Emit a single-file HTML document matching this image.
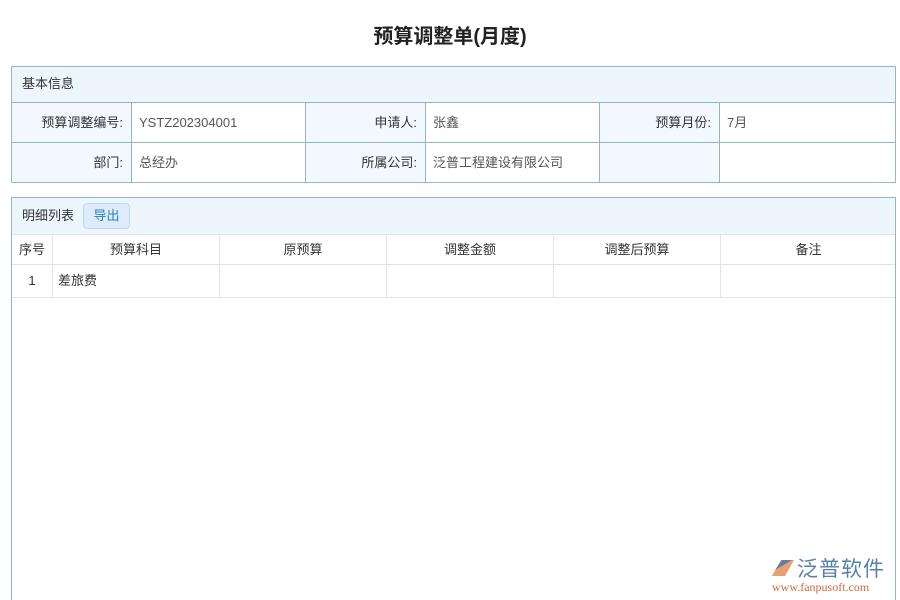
<!DOCTYPE html>
<html><head><meta charset="utf-8"><style>
*{margin:0;padding:0;box-sizing:border-box}
html,body{width:900px;height:600px;overflow:hidden}
body{background:#fff;font-family:"Liberation Sans","Noto Sans CJK SC",sans-serif;font-size:13px;color:#333;position:relative}
.a{position:absolute}
h1{position:absolute;left:0;width:900px;top:20px;text-align:center;font-size:20px;font-weight:bold;color:#222}
.bx{position:absolute;border:1px solid #8fb6c9}
.l{position:absolute;background:#f2f8fe;text-align:right;padding-right:8px;line-height:39px;border-right:1px solid #8fb6c9}
.v{position:absolute;line-height:39px;padding-left:7px;border-right:1px solid #8fb6c9;color:#555}
.hl{position:absolute;left:0;right:0;height:1px;background:#8fb6c9}
.th,.td{position:absolute;text-align:center;border-right:1px solid #e3e3e3}
.gl{position:absolute;left:0;right:0;height:1px;background:#e3e3e3}
</style></head><body>
<h1>预算调整单(月度)</h1>
<div class="bx" style="left:11px;top:66px;width:885px;height:117px">
 <div class="a" style="left:0;top:0;right:0;height:36px;background:#eef6fd;line-height:34px;padding-left:10px">基本信息</div>
 <div class="hl" style="top:35px"></div>
 <div class="hl" style="top:75px"></div>
 <div class="l" style="left:0;top:36px;width:120px;height:39px">预算调整编号:</div>
 <div class="v" style="left:120px;top:36px;width:174px;height:39px">YSTZ202304001</div>
 <div class="l" style="left:294px;top:36px;width:120px;height:39px">申请人:</div>
 <div class="v" style="left:414px;top:36px;width:174px;height:39px">张鑫</div>
 <div class="l" style="left:588px;top:36px;width:120px;height:39px">预算月份:</div>
 <div class="v" style="left:708px;top:36px;width:176px;height:39px;border:none">7月</div>
 <div class="l" style="left:0;top:76px;width:120px;height:39px">部门:</div>
 <div class="v" style="left:120px;top:76px;width:174px;height:39px">总经办</div>
 <div class="l" style="left:294px;top:76px;width:120px;height:39px">所属公司:</div>
 <div class="v" style="left:414px;top:76px;width:174px;height:39px">泛普工程建设有限公司</div>
 <div class="l" style="left:588px;top:76px;width:120px;height:39px"></div>
</div>
<div class="bx" style="left:11px;top:197px;width:885px;height:410px">
 <div class="a" style="left:0;top:0;right:0;height:37px;background:#eef6fd;border-bottom:1px solid #e3e3e3"></div>
 <div class="a" style="left:10px;top:0;line-height:36px">明细列表</div>
 <div class="a" style="left:71px;top:5px;width:47px;height:26px;background:#dcecfa;border:1px solid #bcd7ee;border-radius:4px;color:#2a7fc9;text-align:center;line-height:24px">导出</div>
 <div class="th" style="left:0;top:37px;width:41px;height:29px;line-height:29px">序号</div>
 <div class="th" style="left:41px;top:37px;width:167px;height:29px;line-height:29px">预算科目</div>
 <div class="th" style="left:208px;top:37px;width:167px;height:29px;line-height:29px">原预算</div>
 <div class="th" style="left:375px;top:37px;width:167px;height:29px;line-height:29px">调整金额</div>
 <div class="th" style="left:542px;top:37px;width:167px;height:29px;line-height:29px">调整后预算</div>
 <div class="th" style="left:709px;top:37px;width:175px;height:29px;line-height:29px;border:none">备注</div>
 <div class="gl" style="top:66px"></div>
 <div class="td" style="left:0;top:67px;width:41px;height:32px;line-height:32px">1</div>
 <div class="td" style="left:41px;top:67px;width:167px;height:32px;line-height:32px;text-align:left;padding-left:5px">差旅费</div>
 <div class="td" style="left:208px;top:67px;width:167px;height:32px"></div>
 <div class="td" style="left:375px;top:67px;width:167px;height:32px"></div>
 <div class="td" style="left:542px;top:67px;width:167px;height:32px"></div>
 <div class="gl" style="top:99px"></div>
</div>
<div class="a" style="left:770px;top:553px;width:125px;height:45px">
 <svg class="a" style="left:0;top:3px" width="26" height="22" viewBox="0 0 26 22"><path d="M2 20 L11 4 L24 4 L15 20Z" fill="#e8a070"/><path d="M5 14 L12 4 L22 4 Z" fill="#5a7fa8"/></svg>
 <div class="a" style="left:27px;top:0;font-size:21px;color:#5a7fa8;white-space:nowrap;letter-spacing:1px">泛普软件</div>
 <div class="a" style="left:2px;top:27px;font-size:12px;color:#d06a40;font-family:'Liberation Serif',serif;white-space:nowrap">www.fanpusoft.com</div>
</div>
</body></html>
